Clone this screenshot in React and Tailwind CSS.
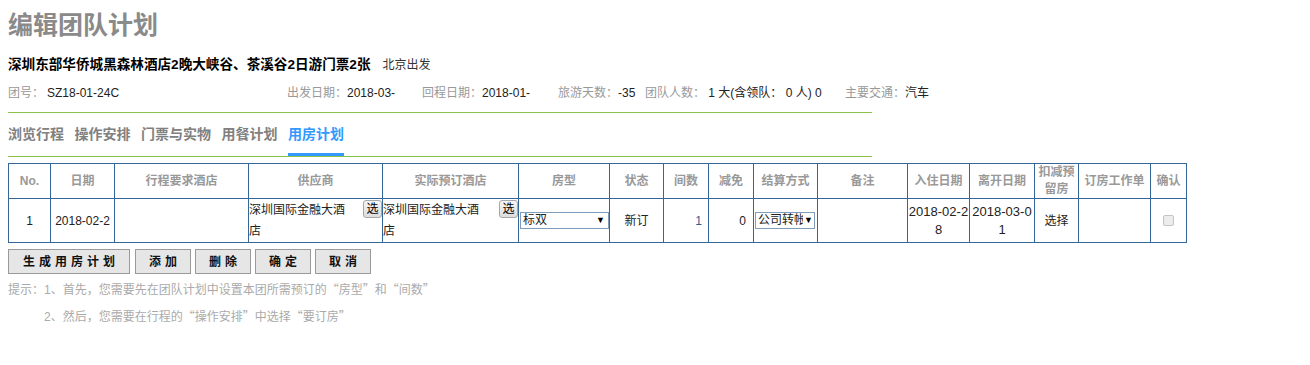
export default function App() {
  const th = "border border-[#336699] p-0 text-center align-middle text-[12px] font-bold leading-[17px] text-[#999] h-[33px]";
  const td = "border border-[#336699] p-0 text-center align-middle text-[12px] text-[#222] h-[43px]";
  const q = "font-['Noto_Sans_CJK_SC',sans-serif]";
  return (
    <div className="w-[1310px] h-[365px] bg-white font-['Liberation_Sans','Noto_Sans_CJK_SC',sans-serif] px-[8px]">
      <div className="h-[51px] flex items-center text-[25px] font-bold text-[#8a8a8a]">编辑团队计划</div>
      <div className="h-[28px] flex items-center">
        <span className="text-[13.6px] font-bold text-black">深圳东部华侨城黑森林酒店2晚大峡谷、茶溪谷2日游门票2张</span>
        <span className="ml-[12px] text-[12px] text-[#333]">北京出发</span>
      </div>
      <div className="h-[28px] flex items-center text-[12px] whitespace-nowrap">
        <div className="w-[279px]"><span className="text-[#999]">团号：</span><span className="ml-[3px] text-[#222]">SZ18-01-24C</span></div>
        <div className="w-[135px]"><span className="text-[#999]">出发日期：</span><span className="text-[#222]">2018-03-</span></div>
        <div className="w-[136px]"><span className="text-[#999]">回程日期：</span><span className="text-[#222]">2018-01-</span></div>
        <div className="w-[87px]"><span className="text-[#999]">旅游天数：</span><span className="text-[#222]">-35</span></div>
        <div className="w-[200px]"><span className="text-[#999]">团队人数：</span><span className="text-[#222]"> 1 大(含领队： 0 人) 0</span></div>
        <div><span className="text-[#999]">主要交通：</span><span className="text-[#222]">汽车</span></div>
      </div>
      <div className="h-[5px]" />
      <div className="w-[864px] h-px bg-[#8cc34b]" />
      <div className="h-[43px] flex gap-[10.5px] text-[14px] font-bold">
        <div className="pt-[11px] leading-[20px] text-[#808080]">浏览行程</div>
        <div className="pt-[11px] leading-[20px] text-[#808080]">操作安排</div>
        <div className="pt-[11px] leading-[20px] text-[#808080]">门票与实物</div>
        <div className="pt-[11px] leading-[20px] text-[#808080]">用餐计划</div>
        <div className="pt-[11px] leading-[20px] text-[#3399ff] border-b-[3px] border-[#3399ff] h-[43px]">用房计划</div>
      </div>
      <div className="w-[864px] h-px bg-[#8cc34b]" />
      <div className="h-[6px]" />
      <table className="table-fixed border-collapse w-[1179px]">
        <colgroup>
          <col className="w-[42px]" />
          <col className="w-[64px]" />
          <col className="w-[134px]" />
          <col className="w-[134px]" />
          <col className="w-[136px]" />
          <col className="w-[91px]" />
          <col className="w-[54px]" />
          <col className="w-[45px]" />
          <col className="w-[45px]" />
          <col className="w-[64px]" />
          <col className="w-[90px]" />
          <col className="w-[62px]" />
          <col className="w-[65px]" />
          <col className="w-[44px]" />
          <col className="w-[72px]" />
          <col className="w-[36px]" />
        </colgroup>
        <thead>
          <tr>
            <th className={th}>No.</th>
            <th className={th}>日期</th>
            <th className={th}>行程要求酒店</th>
            <th className={th}>供应商</th>
            <th className={th}>实际预订酒店</th>
            <th className={th}>房型</th>
            <th className={th}>状态</th>
            <th className={th}>间数</th>
            <th className={th}>减免</th>
            <th className={th}>结算方式</th>
            <th className={th}>备注</th>
            <th className={th}>入住日期</th>
            <th className={th}>离开日期</th>
            <th className={th}>扣减预<br />留房</th>
            <th className={th}>订房工作单</th>
            <th className={th}>确认</th>
          </tr>
        </thead>
        <tbody>
          <tr>
            <td className={td}>1</td>
            <td className={td}>2018-02-2</td>
            <td className={td}></td>
            <td className={td}>
              <div className="flex justify-between items-start h-[43px]">
                <div className="w-[100px] text-left leading-[21px] pt-[1px]">深圳国际金融大酒店</div>
                <div className="w-[19px] h-[18px] mt-[1px] border border-[#a8a8a8] rounded-[3px] bg-gradient-to-b from-[#f6f6f6] to-[#dddddd] text-[12px] leading-[16px] text-center text-black">选</div>
              </div>
            </td>
            <td className={td}>
              <div className="flex justify-between items-start h-[43px]">
                <div className="w-[100px] text-left leading-[21px] pt-[1px]">深圳国际金融大酒店</div>
                <div className="w-[19px] h-[18px] mt-[1px] border border-[#a8a8a8] rounded-[3px] bg-gradient-to-b from-[#f6f6f6] to-[#dddddd] text-[12px] leading-[16px] text-center text-black">选</div>
              </div>
            </td>
            <td className={td}>
              <div className="w-[89px] h-[17px] ml-[1px] border border-[#7f9db9] flex items-center justify-between pl-[2px] pr-[3px] text-[12px] leading-[15px] bg-white">
                <span>标双</span>
                <span className="text-[9px] text-black">▼</span>
              </div>
            </td>
            <td className={td}>新订</td>
            <td className={`${td} text-right`}><span className="pr-[6px] text-[#2b5f94]">1</span></td>
            <td className={`${td} text-right`}><span className="pr-[7px]">0</span></td>
            <td className={td}>
              <div className="w-[60px] h-[17px] ml-[1px] border border-[#7f9db9] flex items-center pl-[2px] text-[12px] leading-[15px] bg-white whitespace-nowrap">
                <span className="block overflow-hidden w-[45px] text-left">公司转帐</span>
                <span className="text-[9px] text-black ml-[1px]">▼</span>
              </div>
            </td>
            <td className={td}></td>
            <td className={`${td} text-[13px] leading-[18px] break-all`}>2018-02-28</td>
            <td className={`${td} text-[13px] leading-[18px] break-all`}>2018-03-01</td>
            <td className={td}>选择</td>
            <td className={td}></td>
            <td className={td}>
              <div className="flex justify-center">
                <span className="block w-[11px] h-[11px] border border-[#c4c4c4] rounded-[2px] bg-[#ececec]" />
              </div>
            </td>
          </tr>
        </tbody>
      </table>
      <div className="h-[6px]" />
      <div className="flex gap-[4px] text-[12px] font-bold text-[#111] tracking-[4px]">
        <div className="w-[122px] h-[25px] border border-[#9a9a9a] bg-[#e6e6e6] flex items-center justify-center pl-[4px]">生成用房计划</div>
        <div className="w-[56px] h-[25px] border border-[#9a9a9a] bg-[#e6e6e6] flex items-center justify-center pl-[4px] ml-px">添加</div>
        <div className="w-[56px] h-[25px] border border-[#9a9a9a] bg-[#e6e6e6] flex items-center justify-center pl-[4px]">删除</div>
        <div className="w-[56px] h-[25px] border border-[#9a9a9a] bg-[#e6e6e6] flex items-center justify-center pl-[4px]">确定</div>
        <div className="w-[56px] h-[25px] border border-[#9a9a9a] bg-[#e6e6e6] flex items-center justify-center pl-[4px]">取消</div>
      </div>
      <div className="h-[2px]" />
      <div className="text-[12px] leading-[26px] text-[#aaa]">提示：1、首先，您需要先在团队计划中设置本团所需预订的<span className={q}>“</span>房型<span className={q}>”</span>和<span className={q}>“</span>间数<span className={q}>”</span></div>
      <div className="text-[12px] leading-[26px] text-[#aaa] pl-[36px]">2、然后，您需要在行程的<span className={q}>“</span>操作安排<span className={q}>”</span>中选择<span className={q}>“</span>要订房<span className={q}>”</span></div>
    </div>
  );
}
